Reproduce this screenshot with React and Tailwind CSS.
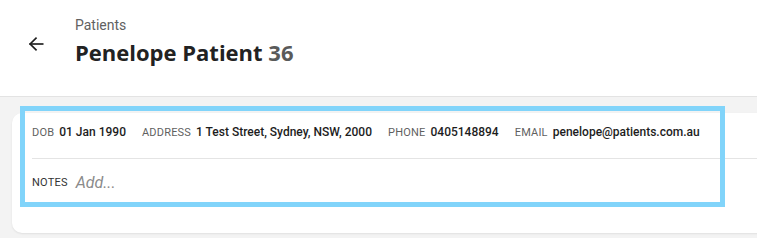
import React from 'react';

function BackArrow() {
  return (
    <svg width="20" height="20" viewBox="0 0 24 24" fill="none" stroke="#1f1f1f" strokeWidth="2" strokeLinecap="square">
      <path d="M20 12H5" />
      <path d="M12 5l-7 7 7 7" />
    </svg>
  );
}

function Field({ label, value }) {
  return (
    <div className="flex items-baseline gap-[5px]">
      <span className="text-[11px] tracking-[0.2px] text-[#5f5f5f] uppercase">{label}</span>
      <span className="text-[12px] font-medium text-[#1d1d1d]">{value}</span>
    </div>
  );
}

export default function App() {
  return (
    <div className="relative w-[757px] h-[238px] overflow-hidden bg-[#f3f3f3] font-['Roboto',sans-serif]">
      {/* Page header */}
      <header className="h-[97px] bg-white border-b border-[#e3e3e3] flex items-start">
        <button className="mt-[33px] ml-[25px] w-[22px] h-[22px] flex items-center justify-center">
          <BackArrow />
        </button>
        <div className="ml-[28px] mt-[16px] flex flex-col">
          <span className="text-[14px] text-[#616161] leading-[19px]">Patients</span>
          <h1 className="mt-[2px] text-[22px] leading-[30px] font-bold text-[#222] font-['Open_Sans',sans-serif] tracking-[0px]">
            Penelope Patient <span className="text-[#5a5a5a]">36</span>
          </h1>
        </div>
      </header>

      {/* Patient card */}
      <div className="ml-[12px] mt-[16px] mr-[-20px] bg-white rounded-l-[10px] shadow-[0_1px_2px_rgba(0,0,0,0.08)] h-[120px]">
        <div className="ml-[20px] h-[46px] border-b border-[#e4e4e4] flex items-center gap-[16px] pb-[6px]">
          <Field label="DOB" value="01 Jan 1990" />
          <Field label="Address" value="1 Test Street, Sydney, NSW, 2000" />
          <Field label="Phone" value="0405148894" />
          <Field label="Email" value="penelope@patients.com.au" />
        </div>
        <div className="pl-[20px] h-[48px] flex items-center gap-[8px]">
          <span className="text-[11px] tracking-[0.2px] text-[#333]">NOTES</span>
          <span className="text-[16px] italic text-[#8a8a8a]">Add...</span>
        </div>
      </div>

      {/* Selection highlight */}
      <div className="absolute left-[20px] top-[106px] w-[705px] h-[101px] border-[5px] border-[#81d4fa] pointer-events-none" />
    </div>
  );
}
